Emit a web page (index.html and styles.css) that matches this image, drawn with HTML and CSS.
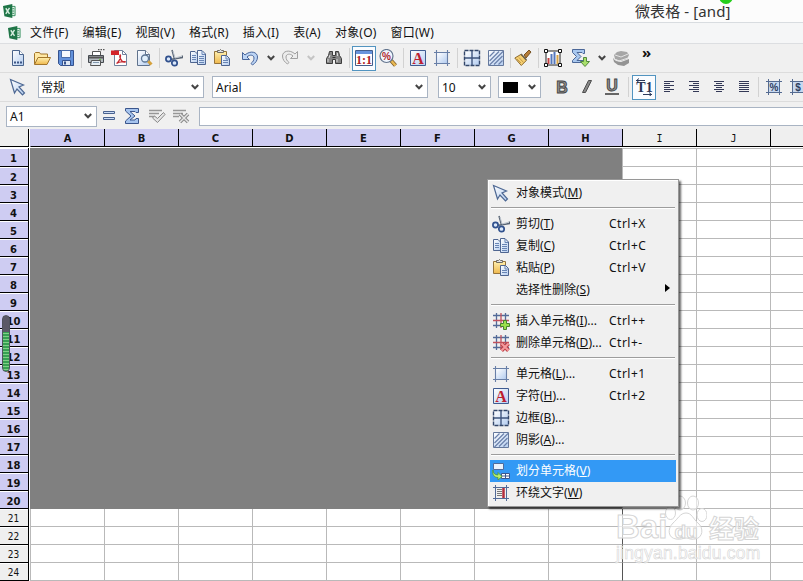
FILE: index.html
```html
<!DOCTYPE html>
<html lang="zh-CN">
<head>
    <meta charset="UTF-8">
    <title>微表格 - [and]</title>
    <link rel="stylesheet" href="styles.css">
</head>
<body>
    <!-- ICONS -->
    <svg class="defs">
        <defs>
            <linearGradient id="blue" x1="0" y1="0" x2="1" y2="1"><stop offset="0" stop-color="#fff"/><stop offset="1" stop-color="#b4cdf0"/></linearGradient>
            <linearGradient id="gold" x1="0" y1="0" x2="0" y2="1"><stop offset="0" stop-color="#fff0b0"/><stop offset="1" stop-color="#efb84c"/></linearGradient>
        </defs>
    </svg>
    <svg class="symbols">
        <symbol id="i-app" viewBox="0 0 14 16"><path d="M9 2.500h4v10H9z" fill="#e8f4ec" stroke="#2d8a57"/><path d="M10 5h2M10 7.500h2M10 10h2" stroke="#2d8a57"/><path d="M0 2L10 0v15L1.500 13z" fill="#1f7547"/><path d="M3 4.500l4 6M7 4l-4 6.500" stroke="#d9efe1" stroke-width="1.500"/></symbol>
        <symbol id="i-new" viewBox="0 0 18 18"><path d="M3.500 1.500h7l4 4v11h-11z" fill="url(#blue)" stroke="#4a648c"/><path d="M10.500 1.500v4h4" fill="#fff" stroke="#4a648c"/><path d="M5 13.500h8" stroke="#3d5686" stroke-width="2" stroke-dasharray="2 1"/></symbol>
        <symbol id="i-open" viewBox="0 0 18 18"><path d="M1.500 15V4.500l1-1h4l1 1.500h7v3" fill="#ffe9a5" stroke="#a3762c"/><path d="M1.500 15.500L5 8.500h12.500L14 15.500z" fill="url(#gold)" stroke="#a3762c"/></symbol>
        <symbol id="i-save" viewBox="0 0 18 18"><path d="M1.500 1.500h15v15h-13l-2-2z" fill="#6291db" stroke="#35528e"/><path d="M4.500 1.500h9v7h-9z" fill="#f5f8fd" stroke="#496ca8"/><path d="M5.500 11.500h8v5h-8z" fill="#dfe8f5" stroke="#35528e"/><path d="M7 12.500h2v3H7z" fill="#35528e"/></symbol>
        <symbol id="i-print" viewBox="0 0 18 18"><path d="M5.500 7V2.500h8V7" fill="#fff" stroke="#555"/><path d="M1.500 6.500h15v7h-15z" fill="#b3b9bf" stroke="#464b50"/><path d="M2 8.500h14" stroke="#555" stroke-width="2"/><path d="M4.500 11.500h9v5h-10z" fill="#e6eef5" stroke="#555"/><path d="M6 13.500h6" stroke="#8197ac"/><path d="M12 10.500h2" stroke="#6bc549"/><path d="M11 .5h8" stroke="#555" stroke-width="1.500" stroke-dasharray="1.500 1"/></symbol>
        <symbol id="i-pdf" viewBox="0 0 18 18"><path d="M3.500 1.500h8l4 4v11h-12z" fill="#fff" stroke="#70829d"/><path d="M11.500 1.500v4h4" fill="none" stroke="#70829d"/><path d="M0 1.500h8v4.500H0z" fill="#d2232a"/><path d="M5.500 14.500c2-1 4-5 4-7.500s-1 0-.5 1.500c1 3 3 5 5 4.500s-5-1-8.500 1.500" fill="none" stroke="#c52b32" stroke-width="1.300"/></symbol>
        <symbol id="i-preview" viewBox="0 0 18 18"><path d="M2.500 1.500h8l4 4v11h-12z" fill="url(#blue)" stroke="#60738d"/><path d="M10.500 1.500v4h4" fill="#fff" stroke="#60738d"/><path d="M13 12l3.500 3.500" stroke="#d5a13c" stroke-width="3"/><circle cx="10" cy="9.500" r="3.500" fill="#e0effc" stroke="#5c7594" stroke-width="1.300"/></symbol>
        <symbol id="i-cut" viewBox="0 0 18 18"><path d="M7 1l2.500 9M17.500 6.500v2L5 10.500" fill="none" stroke="#596575" stroke-width="1.500"/><path d="M8 2l2 7 7-2" fill="none" stroke="#bec6cf"/><circle cx="3.500" cy="10" r="2.600" fill="#dbe8fa" stroke="#31518d" stroke-width="1.700"/><circle cx="9.500" cy="14" r="2.700" fill="#dbe8fa" stroke="#31518d" stroke-width="1.700"/></symbol>
        <symbol id="i-copy" viewBox="0 0 18 18"><path d="M1.500 2.500H6l3 3v8H1.500z" fill="url(#blue)" stroke="#4e6590"/><path d="M8.500 1.500h4.500l3.500 3.500v10.500h-8z" fill="url(#blue)" stroke="#4e6590"/><path d="M13 2v3.500h3M3 6.500h4M3 8.500h4M3 10.500h4M10 7.500h5M10 9.500h5M10 11.500h5M10 13.500h5" fill="none" stroke="#6885b5"/></symbol>
        <symbol id="i-paste" viewBox="0 0 18 18"><path d="M1.500 2.500h12v12h-12z" fill="url(#gold)" stroke="#95733b"/><path d="M4.500 3.500v-2h2l1-1 1 1h2v2z" fill="#e1e4e9" stroke="#6f6a60"/><path d="M8.500 6.500h5l3 3v7h-8z" fill="url(#blue)" stroke="#4e6590"/><path d="M13 7v3h3M10 11.500h5M10 13.500h5" fill="none" stroke="#6885b5"/></symbol>
        <symbol id="i-undo" viewBox="0 0 18 18"><path d="M1.500 3.500v7h7L6 8c3-3 7-2 7 1 0 2-1 4-3 5.500l1.500 1.500c3-2 5-4.500 5-8 0-5-7-7-12.500-2z" fill="#bdd5f5" stroke="#48659b"/></symbol>
        <symbol id="i-redo" viewBox="0 0 18 18"><path d="M16.500 2.500v7h-7L12 7C9 4 5 5 5 8c0 2 1 4 3 5.500L6.500 15C3.500 13 1.500 10.500 1.500 7c0-5 7-7 12.500-2z" fill="#ececec" stroke="#a0a0a0"/></symbol>
        <symbol id="i-find" viewBox="0 0 18 18"><path d="M4.500 2.500h3v4h3v-4h3l1 4 2 3v5h-6v-4h-3v4h-6v-5l2-3z" fill="#858585" stroke="#3c3c3c"/><path d="M3 10v3M5 6l-1 3M12 10v3M12.500 4v3" stroke="#d9d9d9"/><path d="M7.500 8.500h3" stroke="#333"/></symbol>
        <symbol id="i-ratio" viewBox="0 0 18 18"><path d="M.5 1.500h17v15H.5z" fill="#fff" stroke="#435e8c"/><path d="M1 2h16v3H1z" fill="#6994dc"/><text x="9" y="14.500" class="g-ratio">1:1</text></symbol>
        <symbol id="i-zoom" viewBox="0 0 18 18"><path d="M12 11.500l4.500 5" stroke="#7b5b27" stroke-width="4"/><path d="M12.500 12l4 4.500" stroke="#e9b953" stroke-width="2.500"/><circle cx="7.500" cy="7" r="6.500" fill="#f0f6fe" stroke="#64768f" stroke-width="1.200"/><text x="7.500" y="10.500" class="g-pct">%</text></symbol>
        <symbol id="i-char" viewBox="0 0 18 18"><path d="M1.500 1.500h15v15h-15z" fill="url(#blue)" stroke="#405c91"/><text x="9" y="14.500" class="g-char">A</text></symbol>
        <symbol id="i-cell" viewBox="0 0 18 18"><path d="M4 4h10v10H4z" fill="url(#blue)"/><path d="M3.500 1v16M14.500 1v16M1 3.500h16M1 14.500h16" stroke="#687fa7" stroke-width="1.100"/></symbol>
        <symbol id="i-border" viewBox="0 0 18 18"><path d="M2 2h14v14H2z" fill="url(#blue)"/><path d="M9 2v14M2 9h14" stroke="#3f557e" stroke-width="1.400"/><path d="M1.500 1.500h15v15h-15z" fill="none" stroke="#33476b" stroke-width="1.400" stroke-dasharray="4 1"/></symbol>
        <symbol id="i-shade" viewBox="0 0 18 18"><path d="M1.500 1.500h15v15h-15z" fill="url(#blue)" stroke="#64789c"/><path d="M2.500 7.500l5-5M2.500 12l9.500-9.500M2.500 16L16 2.500M7 15.500L15.500 7M11.500 15.500l4-4" stroke="#6b81ab" stroke-width="1.200"/></symbol>
        <symbol id="i-brush" viewBox="0 0 18 18"><path d="M10 6l5-5 2 2-5 6z" fill="#b57c37" stroke="#785222"/><path d="M.8 9l6-3.500 5.500 6-5 5z" fill="#f6cf71" stroke="#8e6b2f"/><path d="M7 5l5.500 6" stroke="#6e654f" stroke-width="1.500"/><path d="M3 10l4 4M5 8.500l4.500 5" stroke="#c39a48"/></symbol>
        <symbol id="i-chart" viewBox="0 0 18 18"><path d="M2 2h14v14H2z" fill="#fff" stroke="#222"/><path d="M4.500 15V9" stroke="#c34242" stroke-width="2"/><path d="M7.500 15V5M10.500 15V3" stroke="#5578bd" stroke-width="2"/><path d="M13.500 15V6" stroke="#d7a347" stroke-width="2"/><path d="M.5.500h3v3h-3zM14.500.500h3v3h-3zM.5 14.500h3v3h-3zM14.500 14.500h3v3h-3z" fill="#fff" stroke="#111"/></symbol>
        <symbol id="i-sumdown" viewBox="0 0 18 18"><path d="M.5.500h12v4H11l-1-1H5l4 4-4 4h6v2H.5v-2l4-4-4-4z" fill="#a9c8ef" stroke="#4b6798"/><path d="M11.500 8.500h3v4h3l-4.500 5-4.500-5h3z" fill="#a9df6b" stroke="#53893e"/></symbol>
        <symbol id="i-stack" viewBox="0 0 18 18"><path d="M2 6l3-3 4-1 6 1 2 3-2 4-6 2-6-2z" fill="#a6a6a6"/><path d="M1 9l3 3 5 1 8-3v4l-5 3-6-1-4-3z" fill="#949494"/><path d="M3 6l6 2 7-3M2 10l5 2 9-3" stroke="#e3e3e3" fill="none"/></symbol>
        <symbol id="i-arrow" viewBox="0 0 18 18"><path d="M1.500 1.500l13 5.500-4.500 2 5.500 6-2 2-5.500-6-2.500 4z" fill="url(#blue)" stroke="#4c6793" stroke-width="1.200"/></symbol>
        <symbol id="i-bold" viewBox="0 0 18 18"><text x="9" y="14.500" class="g-fmt">B</text></symbol>
        <symbol id="i-italic" viewBox="0 0 18 18"><path d="M10.500 2.500h3l-6 12h-3z" fill="#888" stroke="#4e4e4e"/></symbol>
        <symbol id="i-under" viewBox="0 0 18 18"><text x="9" y="13" class="g-fmt">U</text><path d="M2 16h14" stroke="#444" stroke-width="1.600"/></symbol>
        <symbol id="i-dir" viewBox="0 0 18 18"><text x="9.500" y="14" class="g-dir">T1</text><path d="M1 2.500h9M4 .5L1.500 2.500l2.500 2M8 16.500h9M14 14.500l2.500 2-2.500 2" stroke="#2c3a5b" fill="none"/></symbol>
        <symbol id="i-left" viewBox="0 0 11 12"><path d="M0 .5h10M0 2.500h6M0 4.500h10M0 6.500h6M0 8.500h10M0 10.500h6" stroke="#343957"/></symbol>
        <symbol id="i-right" viewBox="0 0 11 12"><path d="M0 .5h10M4 2.500h6M0 4.500h10M4 6.500h6M0 8.500h10M4 10.500h6" stroke="#343957"/></symbol>
        <symbol id="i-center" viewBox="0 0 11 12"><path d="M0 .5h10M2 2.500h6M0 4.500h10M2 6.500h6M0 8.500h10M2 10.500h6" stroke="#343957"/></symbol>
        <symbol id="i-just" viewBox="0 0 11 12"><path d="M0 .5h10M0 2.500h10M0 4.500h10M0 6.500h10M0 8.500h10M0 10.500h10" stroke="#343957"/></symbol>
        <symbol id="i-pctcell" viewBox="0 0 18 18"><path d="M4 4h11v10H4z" fill="#c7d8ef"/><path d="M3.500 1v16M14.500 1v16M1 3.500h16M1 14.500h16" stroke="#556b91"/><text x="9" y="13" class="g-cell">%</text></symbol>
        <symbol id="i-curcell" viewBox="0 0 18 18"><path d="M4 4h11v10H4z" fill="#c7d8ef"/><path d="M3.500 1v16M14.500 1v16M1 3.500h16M1 14.500h16" stroke="#556b91"/><text x="9" y="13" class="g-cell">$</text></symbol>
        <symbol id="i-eq" viewBox="0 0 18 18"><path d="M3.500 4.500h11v2h-11zM3.500 10.500h11v2h-11z" fill="#cbdcf5" stroke="#49628f"/></symbol>
        <symbol id="i-sum" viewBox="0 0 18 18"><path d="M1.500 1.500h13v4H12l-1-1H6l5 4.500-5 4h5l1-1.500h2.500v5h-13v-2.500L7 9 1.500 4z" fill="#a6c4ee" stroke="#3b568d"/></symbol>
        <symbol id="i-ok" viewBox="0 0 18 18"><path d="M1 3.500h13M1 6.500h10M1 9.500h6" stroke="#979797" stroke-width="1.300"/><path d="M4.500 11l2-2 3 2.500 6-6 1.500 2-7.500 8z" fill="#e5e5e5" stroke="#888"/></symbol>
        <symbol id="i-no" viewBox="0 0 18 18"><path d="M1 3.500h13M1 6.500h10M1 9.500h6" stroke="#979797" stroke-width="1.300"/><path d="M8 7l8 8M16 7l-8 8" stroke="#888" stroke-width="3.500"/><path d="M8 7l8 8M16 7l-8 8" stroke="#e5e5e5" stroke-width="1.500"/></symbol>
        <symbol id="i-ins" viewBox="0 0 18 18"><path d="M4.500 1v15M13.500 1v15M1 3.500h16M1 13.500h16" stroke="#536b98" stroke-width="1.300"/><path d="M9 1v15M1 8.500h16" stroke="#c0515c" stroke-width="1.300"/><path d="M11.500 8.500h3v3h3v3h-3v3h-3v-3h-3v-3h3z" fill="#9be04a" stroke="#47842b"/></symbol>
        <symbol id="i-del" viewBox="0 0 18 18"><path d="M4.500 1v15M13.500 1v15M1 3.500h16M1 13.500h16" stroke="#536b98" stroke-width="1.300"/><path d="M9 1v15M1 8.500h16" stroke="#c0515c" stroke-width="1.300"/><path d="M9.500 9.500l7 7M16.500 9.500l-7 7" stroke="#bf4148" stroke-width="4"/><path d="M9.500 9.500l7 7M16.500 9.500l-7 7" stroke="#f59a9d" stroke-width="2"/></symbol>
        <symbol id="i-split" viewBox="0 0 18 18"><path d="M1.500 1.500h10v6h-10z" fill="#eaf2fc" stroke="#506b9b"/><path d="M9.500 11.500h8v5h-8zM13.500 11v6M9 14h9" fill="#fff" stroke="#3b588e"/><path d="M1 8c0 3 2 5 5 5v-2.500l4 4-4 3.500v-2.500c-4 0-6-3-5-7.500z" fill="#b8ee70" stroke="#4f9636" stroke-width=".8"/></symbol>
        <symbol id="i-wrap" viewBox="0 0 18 18"><path d="M3.500 1v16M14.500 1v16M1 3.500h16M1 14.500h16" stroke="#536b98"/><path d="M5 5.500h5M5 7.500h5M5 9.500h5M5 11.500h5" stroke="#777"/><path d="M11.500 4v10" stroke="#b52e3c" stroke-width="2.500"/></symbol>
        <symbol id="i-caret" viewBox="0 0 8 6"><path d="M.8 1l3.200 3.300L7.200 1" fill="none" stroke="currentColor" stroke-width="2"/></symbol>
    </svg>

    <header class="titlebar">
        <svg class="app-icon"><use href="#i-app"/></svg>
        <h1>微表格 - [and]</h1>
        <span class="status-dot"></span>
    </header>

    <nav class="menubar">
        <svg class="app-icon"><use href="#i-app"/></svg>
        <a>文件(F)</a>
        <a>编辑(E)</a>
        <a>视图(V)</a>
        <a>格式(R)</a>
        <a>插入(I)</a>
        <a>表(A)</a>
        <a>对象(O)</a>
        <a>窗口(W)</a>
    </nav>

    <!-- STANDARD TOOLBAR -->
    <div class="toolbar standard">
        <svg class="ic"><use href="#i-new"/></svg>
        <svg class="ic"><use href="#i-open"/></svg>
        <svg class="ic"><use href="#i-save"/></svg>
        <i class="sep"></i>
        <svg class="ic"><use href="#i-print"/></svg>
        <svg class="ic"><use href="#i-pdf"/></svg>
        <svg class="ic"><use href="#i-preview"/></svg>
        <i class="sep"></i>
        <svg class="ic"><use href="#i-cut"/></svg>
        <svg class="ic"><use href="#i-copy"/></svg>
        <svg class="ic"><use href="#i-paste"/></svg>
        <svg class="ic spaced"><use href="#i-undo"/></svg>
        <svg class="caret"><use href="#i-caret"/></svg>
        <svg class="ic"><use href="#i-redo"/></svg>
        <svg class="caret off"><use href="#i-caret"/></svg>
        <svg class="ic spaced"><use href="#i-find"/></svg>
        <i class="sep"></i>
        <span class="pressed"><svg class="ic"><use href="#i-ratio"/></svg></span>
        <svg class="ic"><use href="#i-zoom"/></svg>
        <i class="sep"></i>
        <svg class="ic"><use href="#i-char"/></svg>
        <svg class="ic"><use href="#i-cell"/></svg>
        <i class="sep"></i>
        <svg class="ic"><use href="#i-border"/></svg>
        <svg class="ic"><use href="#i-shade"/></svg>
        <i class="sep tight"></i>
        <svg class="ic"><use href="#i-brush"/></svg>
        <i class="sep"></i>
        <svg class="ic"><use href="#i-chart"/></svg>
        <svg class="ic spaced"><use href="#i-sumdown"/></svg>
        <svg class="caret"><use href="#i-caret"/></svg>
        <svg class="ic"><use href="#i-stack"/></svg>
        <span class="more">»</span>
    </div>

    <!-- FORMAT TOOLBAR -->
    <div class="toolbar format">
        <svg class="ic"><use href="#i-arrow"/></svg>
        <div class="select style">常规<svg class="caret"><use href="#i-caret"/></svg></div>
        <div class="select font">Arial<svg class="caret"><use href="#i-caret"/></svg></div>
        <div class="select size">10<svg class="caret"><use href="#i-caret"/></svg></div>
        <div class="select color"><b class="swatch"></b><svg class="caret"><use href="#i-caret"/></svg></div>
        <div class="letters">
            <svg class="ic"><use href="#i-bold"/></svg>
            <svg class="ic"><use href="#i-italic"/></svg>
            <svg class="ic"><use href="#i-under"/></svg>
        </div>
        <i class="sep"></i>
        <span class="pressed"><svg class="ic"><use href="#i-dir"/></svg></span>
        <div class="aligns">
            <svg><use href="#i-left"/></svg>
            <svg><use href="#i-right"/></svg>
            <svg><use href="#i-center"/></svg>
            <svg><use href="#i-just"/></svg>
        </div>
        <i class="sep"></i>
        <div class="numbers">
            <svg class="ic"><use href="#i-pctcell"/></svg>
            <svg class="ic"><use href="#i-curcell"/></svg>
        </div>
    </div>

    <div class="formula-bar">
        <div class="select ref">A1<svg class="caret"><use href="#i-caret"/></svg></div>
        <svg class="ic"><use href="#i-eq"/></svg>
        <svg class="ic"><use href="#i-sum"/></svg>
        <svg class="ic"><use href="#i-ok"/></svg>
        <svg class="ic"><use href="#i-no"/></svg>
        <div class="formula-input"></div>
    </div>

    <!-- SHEET -->
    <main class="sheet" id="sheet"></main>

    <div class="gauge"></div>

    <!-- WATERMARK -->
    <div class="watermark">
        <svg class="paw" viewBox="0 0 42 47"><ellipse cx="15" cy="8" rx="5.500" ry="7"/><ellipse cx="28" cy="8" rx="5.500" ry="7"/><ellipse cx="5.500" cy="18" rx="5" ry="6.500"/><ellipse cx="37" cy="20" rx="5" ry="6.500"/><path d="M21 18c6 0 7 6 12 10 6 5 5 15-3 16-5 1-6-1-9-1s-5 2-10 1c-8-1-9-10-3-16 5-4 7-10 13-10z"/></svg>
        <div class="wm-name"><span class="bai">Bai</span><span class="du">du</span><span class="cn">经验</span></div>
        <div class="wm-url">jingyan.baidu.com</div>
    </div>

    <!-- CONTEXT MENU -->
    <div class="context-menu">
        <div class="item"><svg class="ic"><use href="#i-arrow"/></svg><span>对象模式(<u>M</u>)</span></div>
        <hr>
        <div class="item"><svg class="ic"><use href="#i-cut"/></svg><span>剪切(<u>T</u>)</span><kbd>Ctrl+X</kbd></div>
        <div class="item"><svg class="ic"><use href="#i-copy"/></svg><span>复制(<u>C</u>)</span><kbd>Ctrl+C</kbd></div>
        <div class="item"><svg class="ic"><use href="#i-paste"/></svg><span>粘贴(<u>P</u>)</span><kbd>Ctrl+V</kbd></div>
        <div class="item submenu"><svg class="ic"></svg><span>选择性删除(<u>S</u>)</span></div>
        <hr>
        <div class="item"><svg class="ic"><use href="#i-ins"/></svg><span>插入单元格(<u>I</u>)...</span><kbd>Ctrl++</kbd></div>
        <div class="item"><svg class="ic"><use href="#i-del"/></svg><span>删除单元格(<u>D</u>)...</span><kbd>Ctrl+-</kbd></div>
        <hr>
        <div class="item"><svg class="ic"><use href="#i-cell"/></svg><span>单元格(<u>L</u>)...</span><kbd>Ctrl+1</kbd></div>
        <div class="item"><svg class="ic"><use href="#i-char"/></svg><span>字符(<u>H</u>)...</span><kbd>Ctrl+2</kbd></div>
        <div class="item"><svg class="ic"><use href="#i-border"/></svg><span>边框(<u>B</u>)...</span></div>
        <div class="item"><svg class="ic"><use href="#i-shade"/></svg><span>阴影(<u>A</u>)...</span></div>
        <hr>
        <div class="item active"><svg class="ic"><use href="#i-split"/></svg><span>划分单元格(<u>V</u>)</span></div>
        <div class="item"><svg class="ic"><use href="#i-wrap"/></svg><span>环绕文字(<u>W</u>)</span></div>
    </div>

    <script>
        // Build the sheet, A1:H20 is selected
        const cols = ["A", "B", "C", "D", "E", "F", "G", "H", "I", "J", ""];
        const selCols = 8;
        const selRows = 20;
        let html = `<div class="corner"></div>`;
        cols.forEach((c, i) => {
            html += `<div class="col-head ${i < selCols ? "on" : ""}">${c}</div>`;
        });
        for (let r = 1; r <= 24; r++) {
            html += `<div class="row-head ${r <= selRows ? "on" : ""}">${r}</div>`;
            cols.forEach((c, i) => {
                let cls = "cell";
                if (r <= selRows && i < selCols) cls += " selected";
                if (r > selRows && i === selCols) cls += " edge";
                html += `<div class="${cls}"></div>`;
            });
        }
        document.getElementById("sheet").innerHTML = html;
    </script>
</body>
</html>
```
FILE: styles.css
```css
* {
    box-sizing: border-box;
}
body {
    margin: 0;
    width: 803px;
    height: 581px;
    overflow: hidden;
    position: relative;
    background: #fff;
    color: #111;
    font-family: "Noto Sans", "Noto Sans CJK SC", sans-serif;
    font-size: 12px;
}
.defs {
    position: absolute;
    width: 0;
    height: 0;
}
svg {
    display: block;
    flex: none;
}
.symbols {
    display: none;
}
.app-icon {
    width: 13px;
    height: 15px;
}

/* title and menus */
.titlebar {
    height: 23px;
    display: flex;
    align-items: center;
    padding-left: 3px;
    background: #fcfcfc;
    border-bottom: 1px solid #d8dce0;
    position: relative;
}
.titlebar h1 {
    margin: 0 0 0 619px;
    font-size: 15px;
    font-weight: normal;
    line-height: 20px;
    letter-spacing: .1px;
    white-space: nowrap;
    color: #333;
}
.status-dot {
    position: absolute;
    left: 719px;
    top: -11px;
    width: 14px;
    height: 15px;
    border-radius: 50%;
    background: #25cf1c;
}
.menubar {
    height: 21px;
    display: flex;
    align-items: center;
    padding-left: 8px;
    background: #f5f6f7;
    border-bottom: 1px solid #dcdee1;
}
.menubar a {
    margin-right: 14px;
    line-height: 18px;
    letter-spacing: .22px;
    white-space: nowrap;
}
.menubar .app-icon {
    margin-right: 9px;
}

/* toolbars */
.toolbar {
    height: 29px;
    display: flex;
    align-items: center;
    gap: 6px;
    padding-left: 9px;
    background: #f0f0f0;
    border-bottom: 1px solid #dcdcdc;
    overflow: hidden;
}
.ic {
    width: 18px;
    height: 18px;
}
.sep {
    flex: none;
    width: 1px;
    height: 20px;
    margin-right: -1px;
    background: #d2d2d2;
}
.sep.tight {
    margin: 0 -3px 0 -1px;
}
.caret {
    width: 8px;
    height: 6px;
    margin: 0 0 0 2px;
    color: #444;
}
.caret.off {
    color: #c4c4c4;
}
.spaced {
    margin-left: 4px;
}
.pressed {
    flex: none;
    width: 24px;
    height: 25px;
    margin: 0 -3px;
    display: flex;
    align-items: center;
    justify-content: center;
    background: #fafcff;
    border: 1px solid #5294c0;
}
.more {
    margin: -12px 0 0 6px;
    font-size: 15px;
    font-weight: bold;
    line-height: 15px;
    color: #111;
}
.select {
    flex: none;
    height: 22px;
    display: flex;
    align-items: center;
    justify-content: space-between;
    padding: 0 4px 0 3px;
    background: #fff;
    border: 1px solid #a9b4c3;
}
.format {
    gap: 0;
}
.style {
    width: 166px;
    margin-left: 11px;
    padding-left: 2px;
}
.font {
    width: 216px;
    margin-left: 8px;
}
.size {
    width: 53px;
    margin-left: 10px;
}
.color {
    width: 43px;
    margin-left: 7px;
}
.swatch {
    width: 15px;
    height: 11px;
    margin-left: 1px;
    background: #000;
}
.letters {
    display: flex;
    gap: 7px;
    margin: 0 7px 0 12px;
}
.format .pressed {
    margin: 0 0 0 4px;
}
.aligns {
    display: flex;
    gap: 14px;
    margin: 0 8px;
}
.aligns svg {
    width: 11px;
    height: 12px;
}
.numbers {
    display: flex;
    gap: 6px;
    margin-left: 7px;
}
.formula-bar {
    height: 27px;
    display: flex;
    align-items: center;
    padding: 1px 0 0 6px;
    gap: 6px;
    background: #f0f0f0;
}
.ref {
    width: 91px;
    height: 21px;
    margin-right: -3px;
}
.formula-input {
    flex: 1;
    height: 19px;
    margin-left: 3px;
    background: #fff;
    border: 1px solid #a9b4c3;
    border-right: 0;
}

/* lettering inside icons */
.g-ratio, .g-pct, .g-char, .g-fmt, .g-dir, .g-cell {
    text-anchor: middle;
    font-weight: bold;
}
.g-ratio {
    font-family: "Liberation Serif", serif;
    font-size: 12px;
    fill: #ae1b24;
}
.g-pct {
    font-family: "Liberation Sans", sans-serif;
    font-size: 10px;
    fill: #b01f2b;
}
.g-char {
    font-family: "Liberation Serif", serif;
    font-size: 16px;
    fill: #bd2130;
}
.g-fmt {
    font-family: "Liberation Sans", sans-serif;
    font-size: 16px;
    fill: #929292;
    stroke: #454545;
    stroke-width: .9px;
}
.g-dir {
    font-family: "Liberation Serif", serif;
    font-size: 14px;
    fill: #2b3556;
}
.g-cell {
    font-family: "Liberation Sans", sans-serif;
    font-size: 10px;
    fill: #2e405f;
}

/* sheet */
.sheet {
    display: grid;
    grid-template-columns: 30px repeat(11, 74px);
    grid-template-rows: 19px 19px repeat(23, 18px);
    width: 803px;
    height: 452px;
    overflow: hidden;
}
.corner, .col-head, .row-head {
    background: #efefef;
}
.corner {
    width: 29px;
    height: 18px;
    border-right: 1px solid #000;
    border-bottom: 1px solid #000;
}
.col-head {
    height: 18px;
    border-left: 1px solid #000;
    border-bottom: 1px solid #000;
    font: 10px/19px "DejaVu Sans Mono", monospace;
    text-align: center;
}
.col-head:nth-child(2) {
    border-left-color: #ceccf2;
}
.col-head.on, .row-head.on {
    background: #ceccf2;
    font: bold 10px/19px "DejaVu Sans", sans-serif;
}
.row-head {
    width: 29px;
    padding: 1px 1px 0 0;
    border-right: 1px solid #000;
    border-bottom: 1px solid #000;
    box-shadow: inset 0 1px #fff;
    font: 10px/18px "DejaVu Sans Condensed", "DejaVu Sans", sans-serif;
    text-align: center;
}
.cell {
    border-left: 1px solid #b9b9b9;
    border-bottom: 1px solid #b9b9b9;
}
.cell:nth-child(-n+24) {
    border-top: 1px solid #b9b9b9;
}
.cell.selected {
    background: #808080;
    border-color: #808080;
}
.cell.edge {
    border-left-color: #555;
}

/* floating level meter */
.gauge {
    position: absolute;
    left: 2px;
    top: 315px;
    width: 8px;
    height: 57px;
    border: 1px solid #50535c;
    border-radius: 4px;
    background: linear-gradient(#5b5966 16px, transparent 16px), repeating-linear-gradient(#37a052 0 2px, #81cf87 2px 3px);
}

/* context menu */
.context-menu {
    position: absolute;
    left: 487px;
    top: 179px;
    width: 192px;
    height: 328px;
    padding: 2px;
    background: #f0f0f0;
    border: 1px solid #979797;
    box-shadow: inset 1px 1px #fff, 2px 2px 2px rgba(0, 0, 0, .6);
}
.item {
    height: 22px;
    display: flex;
    align-items: center;
    padding-left: 2px;
    white-space: nowrap;
}
.item span {
    width: 93px;
    margin: -2px 0 0 6px;
}
.item kbd {
    margin-top: -2px;
    font: inherit;
    letter-spacing: .5px;
}
.item u {
    text-underline-offset: 1px;
}
.item.active {
    background: #3399f5;
    color: #fff;
}
.submenu::after {
    content: "";
    margin: -4px 0 0 56px;
    border: 4px solid transparent;
    border-left: 5px solid #000;
    border-right: 0;
}
.context-menu hr {
    height: 2px;
    margin: 3px 1px 4px;
    border: 0;
    border-top: 1px solid #9d9d9d;
    background: #fff;
}

/* watermark */
.watermark {
    position: absolute;
    left: 616px;
    top: 495px;
    width: 150px;
    height: 72px;
    color: rgba(255, 255, 255, .7);
    -webkit-text-stroke: 1px #d5d5d5;
}
.paw {
    position: absolute;
    left: 49px;
    top: 0;
    width: 42px;
    height: 47px;
    fill: rgba(255, 255, 255, .6);
    stroke: #d5d5d5;
}
.wm-name {
    position: relative;
    display: flex;
    align-items: baseline;
    height: 48px;
    padding-top: 15px;
    font: bold 33px/34px "Liberation Sans", "Noto Sans CJK SC", sans-serif;
}
.wm-name .bai {
    width: 49px;
}
.wm-name .du {
    width: 42px;
    font-size: 19px;
    text-align: center;
}
.wm-name .cn {
    margin-left: 2px;
    font-size: 25px;
}
.wm-url {
    position: relative;
    font: 17.5px/20px "Liberation Sans", sans-serif;
    letter-spacing: .2px;
    -webkit-text-stroke: .6px #d5d5d5;
}
```
